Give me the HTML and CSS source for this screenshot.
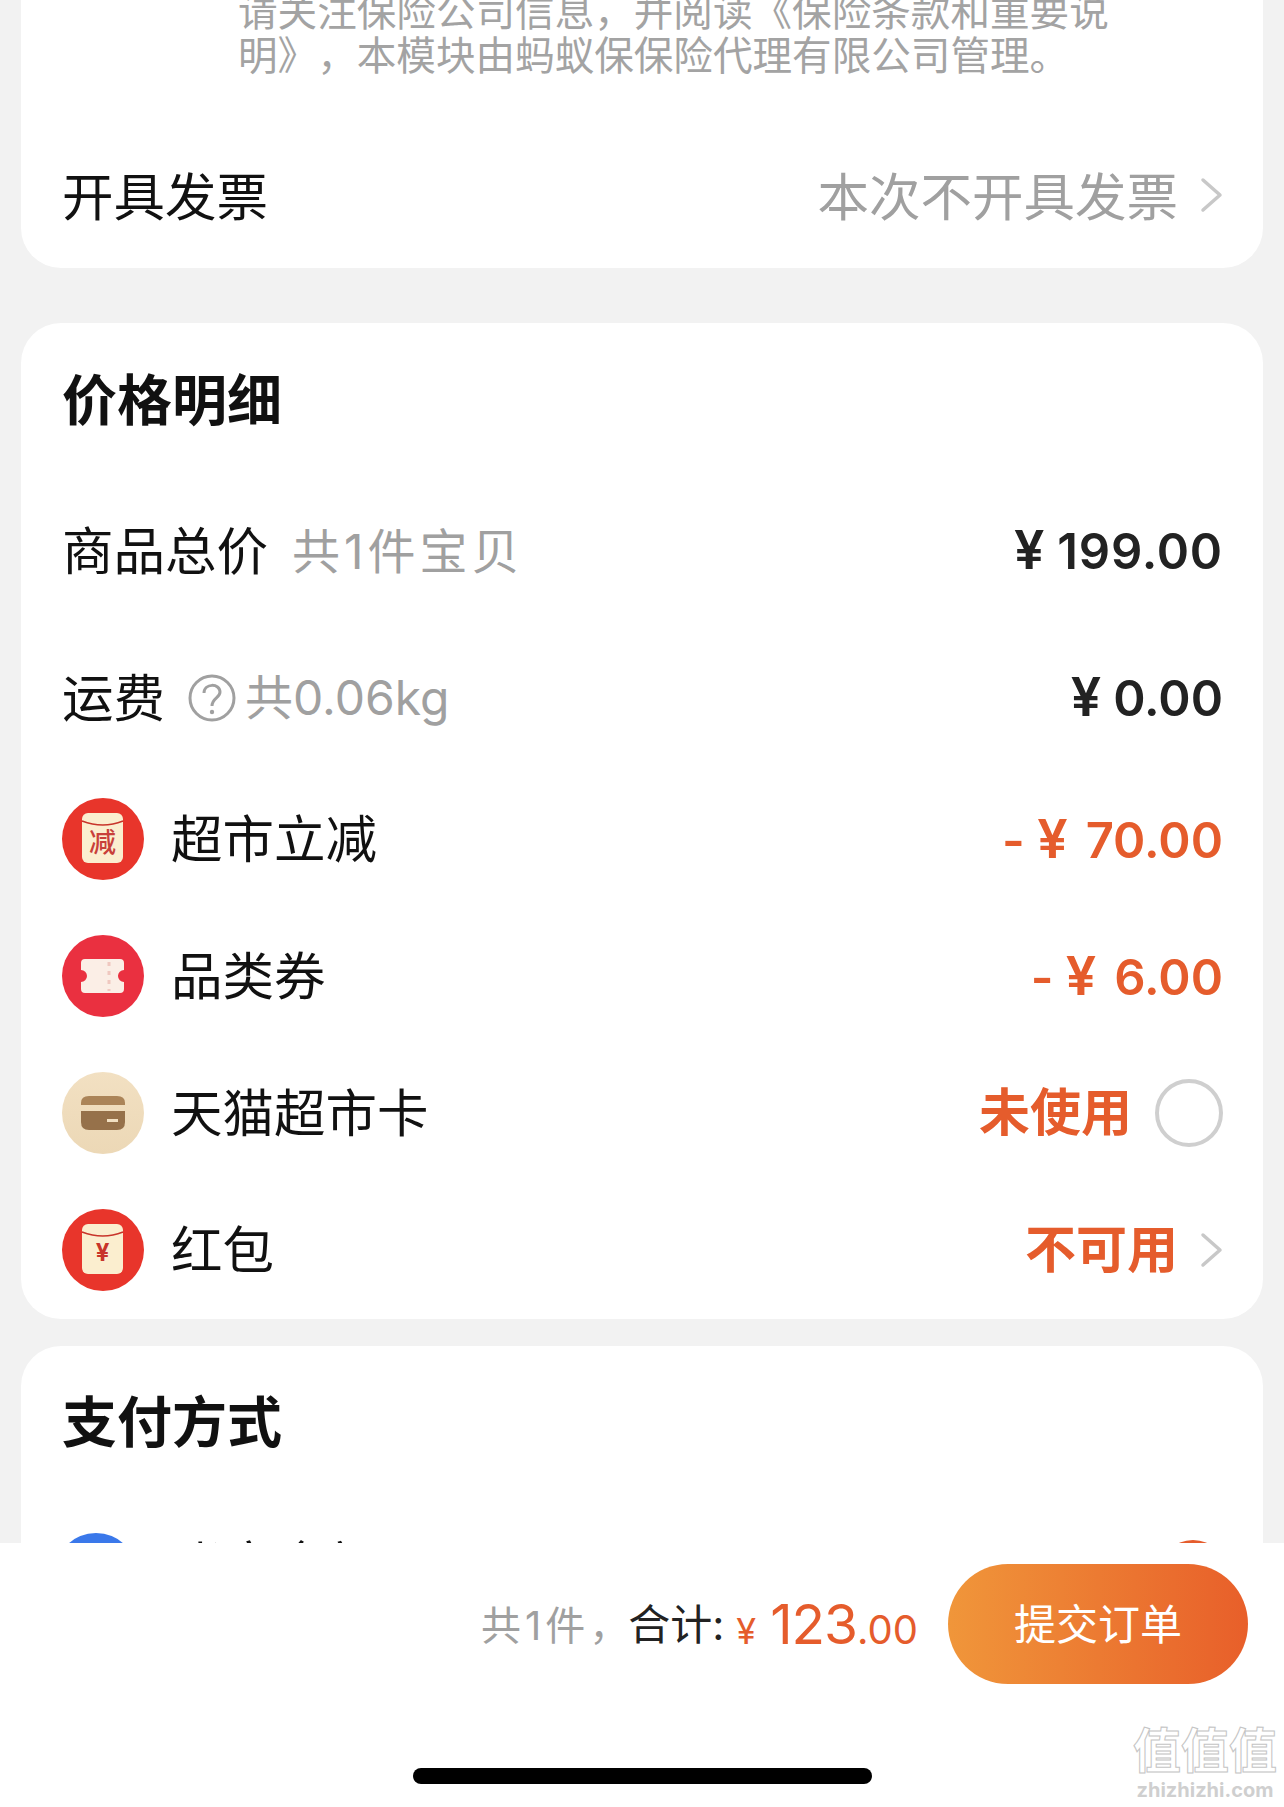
FILE: index.html
```html
<!DOCTYPE html>
<html>
	<head>
		<meta charset="utf-8">
		<title>确认订单</title>
		<link rel="stylesheet" href="styles.css">
	</head>
	<body>
		<div class="page">
			<div class="main">
				<div class="card card-top">
					<div class="note">请关注保险公司信息，并阅读《保险条款和重要说明》，本模块由蚂蚁保保险代理有限公司管理。</div>
					<div class="row row-invoice">
						<span class="label">开具发票</span>
						<div class="right">
							<span class="gray-value">本次不开具发票</span>
							<svg class="chevron" viewBox="0 0 23 36"><path d="M3 3 L20 18 L3 33" fill="none" stroke="#c8c8c8" stroke-width="3.5" stroke-linecap="round" stroke-linejoin="round"/></svg>
						</div>
					</div>
				</div>

				<div class="card card-price">
					<div class="title title-price">价格明细</div>
					<div class="row row-total">
						<div class="left">
							<span class="label">商品总价</span>
							<span class="sub sub-total">共1件宝贝</span>
						</div>
						<span class="amount"><i>¥</i>199.00</span>
					</div>
					<div class="row row-freight">
						<div class="left">
							<span class="label">运费</span>
							<svg class="help" viewBox="0 0 48 48">
								<circle cx="24" cy="24" r="22" fill="none" stroke="#a0a0a0" stroke-width="3"/>
								<path d="M16 19 C16 9 32 9 32 18 C32 24 24 24 24 32" fill="none" stroke="#a0a0a0" stroke-width="3"/>
								<circle cx="24" cy="38" r="2.2" fill="#a0a0a0"/>
							</svg>
							<span class="sub">共0.06kg</span>
						</div>
						<span class="amount"><i>¥</i>0.00</span>
					</div>
					<div class="row row-item">
						<div class="left">
							<svg class="icon" viewBox="0 0 82 82">
								<circle cx="41" cy="41" r="41" fill="#e8352b"/>
								<rect x="20" y="15" width="41" height="50" rx="6" fill="#fbeecf"/>
								<path d="M20 23 Q41 31 61 23" fill="none" stroke="#c8342a" stroke-width="1.5"/>
								<text x="40.5" y="54" class="icon-text">减</text>
							</svg>
							<span class="label">超市立减</span>
						</div>
						<span class="amount orange">- <i>¥</i>70.00</span>
					</div>
					<div class="row row-item">
						<div class="left">
							<svg class="icon" viewBox="0 0 82 82">
								<circle cx="41" cy="41" r="41" fill="#ea3040"/>
								<path d="M23 24 H58 Q62 24 62 28 V35 A6 6 0 0 0 62 47 V54 Q62 58 58 58 H23 Q19 58 19 54 V47 A6 6 0 0 0 19 35 V28 Q19 24 23 24 Z" fill="#fbeee6"/>
								<path d="M47 27 V56" stroke="#f0c8c0" stroke-width="3" stroke-dasharray="4 5" fill="none"/>
							</svg>
							<span class="label">品类券</span>
						</div>
						<span class="amount orange">- <i>¥</i>6.00</span>
					</div>
					<div class="row row-item">
						<div class="left">
							<svg class="icon" viewBox="0 0 82 82">
								<defs>
									<linearGradient id="cardBg" x1="0" y1="0" x2="0" y2="1">
										<stop offset="0" stop-color="#f2e0c2"/>
										<stop offset="1" stop-color="#ecd8b6"/>
									</linearGradient>
								</defs>
								<circle cx="41" cy="41" r="41" fill="url(#cardBg)"/>
								<path d="M27 24 H55 Q63 24 63 31 V33 H19 V31 Q19 24 27 24 Z" fill="#ab8458"/>
								<path d="M19 39 H63 V50 Q63 58 55 58 H27 Q19 58 19 50 Z" fill="#96714a"/>
								<rect x="45" y="47" width="11" height="3" fill="#f2e0c2"/>
							</svg>
							<span class="label">天猫超市卡</span>
						</div>
						<div class="right right-radio">
							<span class="status">未使用</span>
							<span class="radio"></span>
						</div>
					</div>
					<div class="row row-item">
						<div class="left">
							<svg class="icon" viewBox="0 0 82 82">
								<circle cx="41" cy="41" r="41" fill="#e8352b"/>
								<rect x="20" y="15" width="41" height="50" rx="6" fill="#fbeecf"/>
								<path d="M20 23 Q41 31 61 23" fill="none" stroke="#c8342a" stroke-width="1.5"/>
								<text x="40.5" y="52" class="icon-yen">¥</text>
							</svg>
							<span class="label">红包</span>
						</div>
						<div class="right">
							<span class="status">不可用</span>
							<svg class="chevron" viewBox="0 0 23 36"><path d="M3 3 L20 18 L3 33" fill="none" stroke="#c8c8c8" stroke-width="3.5" stroke-linecap="round" stroke-linejoin="round"/></svg>
						</div>
					</div>
				</div>

				<div class="card card-pay">
					<div class="title title-pay">支付方式</div>
					<div class="row row-pay">
						<div class="left">
							<span class="pay-icon"></span>
							<span class="label pay-label">账户余额</span>
						</div>
						<span class="radio-on"></span>
					</div>
				</div>
			</div>

			<div class="footer">
				<div class="bar">
					<span class="count">共1件，</span>
					<span class="sum-label">合计:</span>
					<span class="sum"><i>¥</i><b>123</b><em>.00</em></span>
					<div class="submit">提交订单</div>
				</div>
				<div class="home"></div>
			</div>

			<div class="mark">
				<div class="mark-cn">值值值</div>
				<div class="mark-en">zhizhizhi.com</div>
			</div>
		</div>
	</body>
</html>
```

FILE: styles.css
```css
*{box-sizing:border-box;}
body{
	margin:0;
	background:#f2f2f2;
	color:#111;
	font-family:Inter,"Noto Sans CJK SC",sans-serif;
	text-spacing-trim:space-all;
}
i,em{font-style:normal;}
.page{
	position:relative;
	width:1284px;
	height:1807px;
	display:flex;
	flex-direction:column;
	overflow:hidden;
}
.main{
	height:1543px;
	overflow:hidden;
	padding:0 21px 0 21px;
}
.card{
	background:#fff;
	border-radius:40px;
	padding:0 40px 0 41px;
}
.card-top{
	margin-top:-60px;
	height:328px;
	padding-top:50px;
}
.note{
	margin-left:176px;
	width:885px;
	font-size:39.6px;
	line-height:44px;
	height:136px;
	color:#a3a3a3;
}
.row{
	display:flex;
	align-items:center;
	justify-content:space-between;
}
.left,.right{
	display:flex;
	align-items:center;
}
.row-invoice{height:142px;}
.label{font-size:51.5px;color:#111;padding-bottom:7px;}
.gray-value{font-size:51.5px;color:#a0a0a0;padding-bottom:7px;}
.chevron{
	width:23px;
	height:36px;
	margin-left:22px;
}
.row-invoice .chevron{margin-bottom:4px;}
.card-price{
	margin-top:55px;
	height:996px;
}
.title{
	font-size:55px;
	font-weight:700;
	display:flex;
	align-items:center;
	padding-bottom:9px;
}
.title-price{height:154px;}
.row-total{height:148px;}
.row-freight{height:145px;}
.row-item{height:137px;}
.sub{
	font-size:48px;
	color:#a0a0a0;
	padding-bottom:7px;
}
.sub-total{margin-left:24px;letter-spacing:4px;}
.help{
	width:48px;
	height:48px;
	margin:0 9px 0 23px;
}
.amount{
	font-size:49px;
	font-weight:600;
	color:#222;
	padding-bottom:3px;
}
.row-total .amount{letter-spacing:.8px;}
.amount i{margin-right:12px;font-size:54px;}
.orange{color:#e55c2c;padding-bottom:1px;}
.orange i{margin-right:18px;}
.icon{
	width:82px;
	height:82px;
	margin:0 27px 0 0;
	flex:none;
}
.icon-text{
	font-size:27px;
	font-weight:500;
	fill:#c8403a;
	text-anchor:middle;
}
.icon-yen{
	font-size:24px;
	font-weight:700;
	fill:#c8342a;
	text-anchor:middle;
}
.status{
	font-size:51px;
	font-weight:700;
	color:#e55c2c;
	padding-bottom:7px;
}
.radio{
	width:68px;
	height:68px;
	border:4px solid #cfcfcf;
	border-radius:50%;
	margin-left:23px;
}
.card-pay{
	margin-top:27px;
	height:400px;
}
.title-pay{height:152px;}
.row-pay{height:137px;margin-top:8px;align-items:flex-start;}
.pay-icon{
	width:82px;
	height:82px;
	border-radius:50%;
	background:#3a78ea;
	margin:27px 35px 0 -7px;
}
.pay-label{margin-top:2px;padding-bottom:0;}
.radio-on{
	width:68px;
	height:68px;
	border-radius:50%;
	background:#e55c2c;
	margin:34px -4px 0 0;
}
.footer{
	height:264px;
	background:#fff;
	padding-top:21px;
}
.bar{
	height:120px;
	display:flex;
	align-items:center;
	justify-content:flex-end;
	padding-right:36px;
}
.count{
	font-size:40px;
	letter-spacing:4px;
	color:#a0a0a0;
	margin-right:-5px;
	padding-bottom:3px;
}
.sum-label{
	font-size:42px;
	color:#222;
	margin-right:12px;
	padding-bottom:6px;
}
.sum{
	color:#e55c2c;
	display:flex;
	align-items:baseline;
}
.sum i{font-size:36px;margin-right:14px;}
.sum b{font-size:55px;font-weight:400;letter-spacing:-1px;}
.sum em{font-size:40px;}
.submit{
	width:300px;
	height:120px;
	border-radius:60px;
	margin-left:30px;
	padding-bottom:6px;
	background:linear-gradient(90deg,#f0963a,#e85f2a);
	color:#fff;
	font-size:42px;
	display:flex;
	align-items:center;
	justify-content:center;
}
.home{
	width:459px;
	height:16px;
	border-radius:8px;
	background:#000;
	margin:84px 0 0 413px;
}
.mark{
	position:absolute;
	left:1130px;
	top:1724px;
	width:150px;
	text-align:center;
	color:transparent;
}
.mark-cn{
	font-size:48px;
	line-height:54px;
	font-weight:700;
	-webkit-text-stroke:1px #c4c4c4;
}
.mark-en{
	font-size:20px;
	line-height:24px;
	font-weight:700;
	color:#cfcfcf;
}
```
